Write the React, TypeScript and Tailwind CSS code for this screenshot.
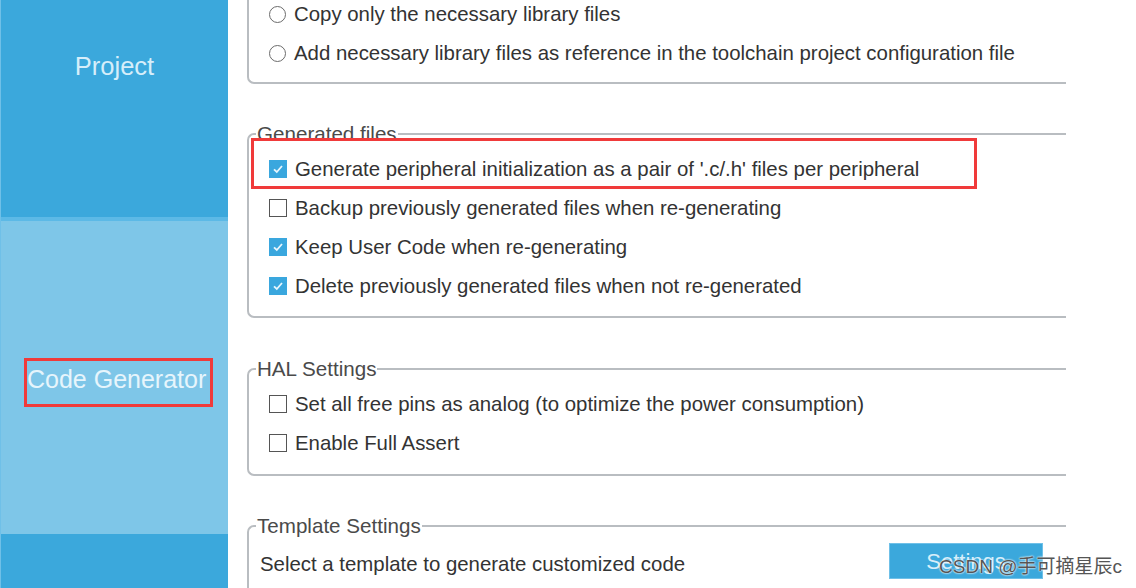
import React from "react"

const font = { fontFamily: '"Liberation Sans", Arial, sans-serif' }

function Radio({ label }: { label: string }) {
  return (
    <div className="flex h-[28px] items-center gap-[8px]">
      <span className="ml-[20px] h-[17px] w-[17px] rounded-full border-[1.5px] border-[#6b6b6b] bg-white" />
      <span className="text-[20.4px] text-[#333]">{label}</span>
    </div>
  )
}

function Check({ label, checked }: { label: string; checked?: boolean }) {
  return (
    <div className="flex h-[28px] items-center gap-[8px]">
      {checked ? (
        <span className="ml-[20px] flex h-[18px] w-[18px] items-center justify-center bg-[#3aa7de]">
          <svg width="12" height="12" viewBox="0 0 12 12">
            <path d="M2 6.3 L4.8 9 L10 3" fill="none" stroke="#e8f6fd" strokeWidth="1.8" />
          </svg>
        </span>
      ) : (
        <span className="ml-[20px] h-[18px] w-[18px] border-[1.5px] border-[#555] bg-white" />
      )}
      <span className="text-[20.4px] text-[#333]">{label}</span>
    </div>
  )
}

function Group({
  title,
  children,
  className,
}: {
  title: string
  children: React.ReactNode
  className?: string
}) {
  return (
    <fieldset
      className={
        "relative w-[819px] rounded-l-[7px] border-2 border-r-0 border-[#b9bdc1] " +
        (className ?? "")
      }
    >
      <legend className="ml-[7px] px-[1px] text-[20.6px] leading-[21px] text-[#4a4a4a]">
        {title}
      </legend>
      {children}
    </fieldset>
  )
}

export default function App() {
  return (
    <div className="relative flex h-[588px] w-[1136px] overflow-hidden bg-white" style={font}>
      {/* sidebar */}
      <div className="flex w-[228px] flex-col border-l border-[#6fc0e8]">
        <div className="flex h-[217px] justify-center bg-[#3ba8dc] pt-[50px]">
          <span className="text-[25.5px] leading-[32px] text-[#d6eefa]">Project</span>
        </div>
        <div className="h-[4px] bg-[#5cb9e6]" />
        <div className="flex h-[313px] bg-[#7ec6e8] pl-[23px] pt-[137px]">
          <div className="relative h-[49px] w-[189px] border-[3px] border-[#f03a3a]">
            <span className="absolute left-[0px] top-[1px] whitespace-nowrap text-[25px] leading-[34px] text-[#e6f5fc]">
              Code Generator
            </span>
          </div>
        </div>
        <div className="flex-1 bg-[#3ba8dc]" />
      </div>

      {/* main */}
      <div className="ml-[19px] flex flex-col">
        <div className="w-[819px] rounded-bl-[7px] border-b-2 border-l-2 border-[#b9bdc1] pb-[15px]">
          <div className="flex flex-col gap-[11px]">
            <Radio label="Copy only the necessary library files" />
            <Radio label="Add necessary library files as reference in the toolchain project configuration file" />
          </div>
        </div>

        <Group title="Generated files" className="mt-[39px] pb-[16px]">
          <div className="absolute left-[2px] top-[-6px] h-[51px] w-[726px] border-[3px] border-[#f03a3a]" />
          <div className="flex flex-col gap-[11px] pt-[11px]">
            <Check checked label="Generate peripheral initialization as a pair of '.c/.h' files per peripheral" />
            <Check label="Backup previously generated files when re-generating" />
            <Check checked label="Keep User Code when re-generating" />
            <Check checked label="Delete previously generated files when not re-generated" />
          </div>
        </Group>

        <Group title="HAL Settings" className="mt-[40px] pb-[17px]">
          <div className="flex flex-col gap-[11px] pt-[11px]">
            <Check label="Set all free pins as analog (to optimize the power consumption)" />
            <Check label="Enable Full Assert" />
          </div>
        </Group>

        <Group title="Template Settings" className="mt-[39px] pb-[20px]">
          <div className="flex items-start justify-between pr-[23px] pt-[7px]">
            <span className="ml-[11px] mt-[6px] text-[20.4px] text-[#333]">
              Select a template to generate customized code
            </span>
            <button className="h-[36px] w-[154px] border border-[#6fc0e8] bg-[#3ba8dc] text-[22px] text-[#d6eefa]">
              Settings
            </button>
          </div>
        </Group>
      </div>

      <div className="absolute right-[14px] top-[555px] text-[19px] leading-[24px] text-[#555] [text-shadow:0_0_2px_#fff,0_0_2px_#fff]"
        style={{ fontFamily: '"Liberation Sans", "Noto Sans CJK SC", sans-serif' }}>
        CSDN @手可摘星辰c
      </div>
    </div>
  )
}
